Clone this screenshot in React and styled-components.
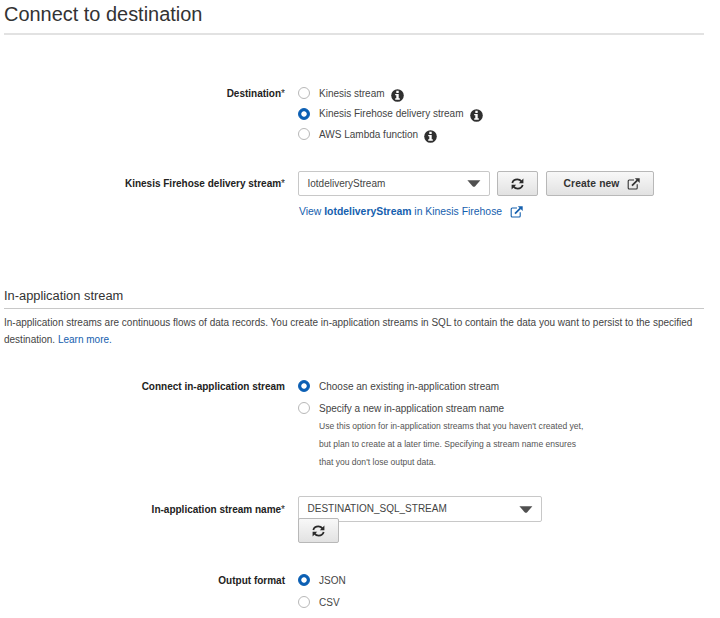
import React from "react";
import styled, { createGlobalStyle } from "styled-components";

const GlobalStyle = createGlobalStyle`
  * { box-sizing: border-box; }
  body { margin: 0; background: #fff; color: #444; font: 10px/20px "Liberation Sans", Arial, sans-serif; }
`;

const Page = styled.main`
  width: 704px;
  height: 618px;
  padding-left: 4px;
  overflow: hidden;
`;
const Title = styled.h1`
  margin: 0;
  height: 35px;
  border-bottom: 2px solid #e2e2e2;
  font-size: 19.95px;
  font-weight: 400;
  line-height: 28px;
  color: #333;
`;
const SectionTitle = styled.h2`
  margin: 64px 0 0;
  height: 23px;
  border-bottom: 1px solid #c8c8c8;
  font-size: 12.85px;
  font-weight: 400;
  line-height: 19px;
  color: #333;
`;
const Intro = styled.p`
  margin: 5px 0 0;
  line-height: 17px;
  white-space: nowrap;
`;
const FormRow = styled.div`
  display: grid;
  grid-template-columns: 281px 1fr;
  column-gap: 13px;
  align-items: start;
  margin-top: ${(p) => p.$top}px;
`;
const Label = styled.div`
  text-align: right;
  font-weight: 700;
  color: #222;
  line-height: ${(p) => p.$line || 21}px;
  white-space: nowrap;
`;
const Required = styled.span`
  font-weight: 400;
`;
const Options = styled.div`
  display: flex;
  flex-direction: column;
`;
const Option = styled.label`
  display: flex;
  align-items: center;
  height: ${(p) => p.$height}px;
  line-height: 21px;
  white-space: nowrap;
`;
const Text = styled.span`
  letter-spacing: ${(p) => p.$spacing || 0}px;
`;
const Radio = styled.span`
  flex: none;
  width: 12px;
  height: 12px;
  margin-right: 9px;
  border-radius: 50%;
  border: 1px solid ${(p) => (p.$checked ? "#0b5fb4" : "#b8b8b8")};
  background: ${(p) => (p.$checked ? "radial-gradient(circle, #fff 2.3px, #0b5fb4 3.1px)" : "#fff")};
`;
const Hint = styled.p`
  margin: -3px 0 0 21px;
  font-size: 8.57px;
  line-height: 18px;
  color: #555;
  white-space: nowrap;
`;
const Controls = styled.div`
  display: flex;
  align-items: flex-start;
`;
const Select = styled.div`
  display: flex;
  align-items: center;
  justify-content: space-between;
  width: ${(p) => p.$width}px;
  height: ${(p) => p.$height || 25}px;
  padding: 0 8px 0 8.5px;
  border: 1px solid #c8c8c8;
  border-radius: 2px;
  background: #fff;
`;
const Button = styled.button`
  position: relative;
  display: flex;
  align-items: center;
  justify-content: center;
  gap: 8px;
  width: ${(p) => p.$width}px;
  height: 25px;
  margin: ${(p) => p.$margin || 0};
  padding: 0 0 0 ${(p) => p.$shift || 0}px;
  border: 1px solid #b8b8b8;
  border-radius: 2px;
  background: linear-gradient(#f8f8f8, #e2e2e2);
  font: 700 10.3px/20px "Liberation Sans", Arial, sans-serif;
  color: #333;
`;
const Link = styled.a`
  color: #1560ae;
  text-decoration: none;
`;
const StreamLink = styled(Link)`
  display: flex;
  align-items: center;
  gap: 8px;
  height: 20px;
  margin: 6px 0 0 1px;
  font-size: 10.4px;
  white-space: nowrap;
`;
const InfoSvg = styled.svg`
  flex: none;
  margin: 4px 0 0 6px;
`;

const Info = () => (
  <InfoSvg width="13" height="13" viewBox="0 0 13 13">
    <circle cx="6.5" cy="6.5" r="6.3" fill="#303030" />
    <path fill="#fff" d="M5.3 1.8h2.4v2.1H5.3zM4.2 4.9h3.5v4.4h1.1v1.4H4.2V9.3h1.1v-3H4.2z" />
  </InfoSvg>
);
const Caret = () => (
  <svg width="14" height="7" viewBox="0 0 14 7">
    <path fill="#505050" d="M.4.2h13L8.2 6.2Q6.9 7.4 5.6 6.2z" />
  </svg>
);
const Refresh = () => (
  <svg width="13" height="12" viewBox="0 0 13 12" fill="none" stroke="#292929" strokeWidth="1.8">
    <path d="M1.3 4.9C2 2.6 4 1.4 6.3 1.4c1.8 0 3.1.7 4.1 2M11.7 7.1c-.7 2.3-2.7 3.5-5 3.5-1.8 0-3.1-.7-4.1-2" />
    <path fill="#292929" stroke="none" d="M12.4.6v4.6H7.8zM.6 11.4V6.8h4.6z" />
  </svg>
);
const External = () => (
  <svg width="13" height="12" viewBox="0 0 13 12" fill="none" stroke="currentColor">
    <path d="M7 2H2.2Q1.2 2 1.2 3v7q0 1 1 1h7q1 0 1-1V6.2" strokeWidth="1.1" />
    <path d="M5 7.6 10.5 2.2" strokeWidth="1.7" />
    <path fill="currentColor" stroke="none" d="M7.8.2h4.9v4.9z" />
  </svg>
);

export default function App() {
  return (
    <>
      <GlobalStyle />
      <Page>
        <Title>Connect to destination</Title>
        <FormRow $top={48}>
          <Label>Destination<Required>*</Required></Label>
          <Options>
            <Option $height={20}><Radio /><Text>Kinesis stream</Text><Info /></Option>
            <Option $height={21}><Radio $checked /><Text>Kinesis Firehose delivery stream</Text><Info /></Option>
            <Option $height={20}><Radio /><Text>AWS Lambda function</Text><Info /></Option>
          </Options>
        </FormRow>
        <FormRow $top={27}>
          <Label $line={25}>Kinesis Firehose delivery stream<Required>*</Required></Label>
          <div>
            <Controls>
              <Select $width={192}><Text>IotdeliveryStream</Text><Caret /></Select>
              <Button $width={41} $margin="0 8px 0 7px"><Refresh /></Button>
              <Button $width={108} $shift={4}><Text $spacing={0.1}>Create new</Text><External /></Button>
            </Controls>
            <StreamLink><Text>View <b>IotdeliveryStream</b> in Kinesis Firehose</Text><External /></StreamLink>
          </div>
        </FormRow>
        <SectionTitle>In-application stream</SectionTitle>
        <Intro>
          <Text>In-application streams are continuous flows of data records. You create in-application streams in SQL to contain the data you want to persist to the specified</Text><br />
          <Text>destination. <Link>Learn more.</Link></Text>
        </Intro>
        <FormRow $top={28}>
          <Label>Connect in-application stream</Label>
          <Options>
            <Option $height={20}><Radio $checked /><Text>Choose an existing in-application stream</Text></Option>
            <Option $height={24}><Radio /><Text>Specify a new in-application stream name</Text></Option>
            <Hint>Use this option for in-application streams that you haven't created yet,<br />but plan to create at a later time. Specifying a stream name ensures<br />that you don't lose output data.</Hint>
          </Options>
        </FormRow>
        <FormRow $top={25}>
          <Label $line={27}>In-application stream name<Required>*</Required></Label>
          <div>
            <Select $width={244} $height={26}><Text>DESTINATION_SQL_STREAM</Text><Caret /></Select>
            <Button $width={41} $margin="-4px 0 0"><Refresh /></Button>
          </div>
        </FormRow>
        <FormRow $top={27}>
          <Label>Output format</Label>
          <Options>
            <Option $height={20}><Radio $checked /><Text>JSON</Text></Option>
            <Option $height={24}><Radio /><Text>CSV</Text></Option>
          </Options>
        </FormRow>
      </Page>
    </>
  );
}
